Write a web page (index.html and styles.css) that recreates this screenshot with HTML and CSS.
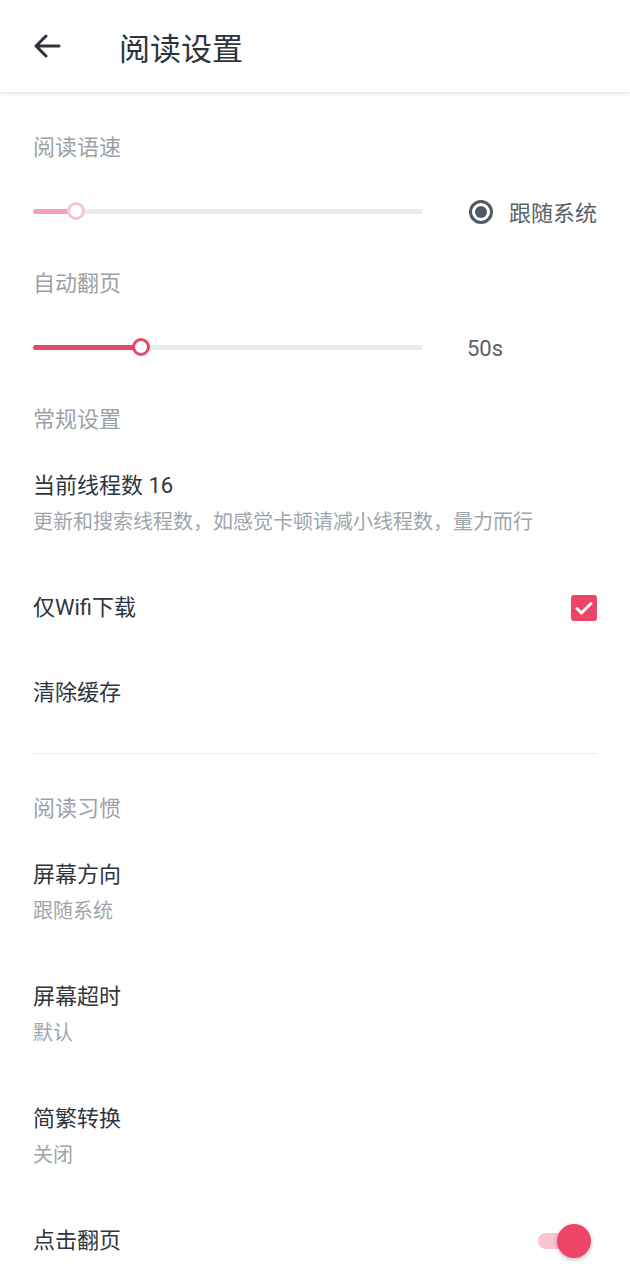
FILE: index.html
```html
<!DOCTYPE html>
<html lang="zh-cn">
  <head>
    <meta charset="utf-8" />
    <meta name="viewport" content="width=device-width, initial-scale=1" />
    <title>阅读设置</title>
    <link rel="stylesheet" href="styles.css">
  </head>
  <body>
    <header class="toolbar">
      <svg class="back" width="28" height="24" viewBox="0 0 28 24">
        <path d="M26 12H3M13 2L3 12l10 10" fill="none" stroke="currentColor" stroke-width="3" stroke-linecap="round" stroke-linejoin="round" />
      </svg>
      <h1 class="toolbar-title">阅读设置</h1>
    </header>

    <main class="content">
      <section class="group">
        <h2 class="group-title">阅读语速</h2>
        <div class="slider-row">
          <div class="slider slider-light">
            <div class="slider-fill" style="width: 11%"></div>
            <div class="slider-thumb" style="left: 11%"></div>
          </div>
          <div class="slider-side">
            <span class="radio"></span>
            <span class="side-text">跟随系统</span>
          </div>
        </div>
        <h2 class="group-title">自动翻页</h2>
        <div class="slider-row">
          <div class="slider">
            <div class="slider-fill" style="width: 27.7%"></div>
            <div class="slider-thumb" style="left: 27.7%"></div>
          </div>
          <div class="slider-side">
            <span class="side-value">50s</span>
          </div>
        </div>
      </section>

      <section class="group group-tight">
        <h2 class="group-title">常规设置</h2>
        <div class="item">
          <div class="item-text">
            <div class="item-title">当前线程数 16</div>
            <div class="item-sub">更新和搜索线程数，如感觉卡顿请减小线程数，量力而行</div>
          </div>
        </div>
        <div class="item">
          <div class="item-text">
            <div class="item-title">仅Wifi下载</div>
          </div>
          <span class="checkbox">
            <svg width="18" height="14" viewBox="0 0 18 14">
              <path d="M2 7.5l4.5 4.5L16 2.5" fill="none" stroke="#fff" stroke-width="3" stroke-linecap="round" stroke-linejoin="round" />
            </svg>
          </span>
        </div>
        <div class="item">
          <div class="item-text">
            <div class="item-title">清除缓存</div>
          </div>
        </div>
      </section>

      <section class="group group-divided">
        <h2 class="group-title">阅读习惯</h2>
        <div class="item">
          <div class="item-text">
            <div class="item-title">屏幕方向</div>
            <div class="item-sub">跟随系统</div>
          </div>
        </div>
        <div class="item">
          <div class="item-text">
            <div class="item-title">屏幕超时</div>
            <div class="item-sub">默认</div>
          </div>
        </div>
        <div class="item">
          <div class="item-text">
            <div class="item-title">简繁转换</div>
            <div class="item-sub">关闭</div>
          </div>
        </div>
        <div class="item">
          <div class="item-text">
            <div class="item-title">点击翻页</div>
          </div>
          <span class="switch"><span class="switch-thumb"></span></span>
        </div>
      </section>
    </main>
  </body>
</html>
```

FILE: styles.css
```css
html,
body {
  margin: 0;
  padding: 0;
  background: #fff;
}
body {
  font-family: Roboto, "Noto Sans CJK SC", sans-serif;
  color: #30363d;
  overflow: hidden;
}

.toolbar {
  height: 92px;
  display: flex;
  align-items: center;
  padding: 0 33px;
  box-sizing: border-box;
  background: #fff;
  box-shadow: 0 1px 4px rgba(0, 0, 0, 0.14);
  position: relative;
  z-index: 1;
}
.back {
  color: #2c333b;
  flex: none;
}
.toolbar-title {
  margin: 0 0 0 58px;
  font-size: 31px;
  font-weight: 400;
  color: #2c333b;
}

.content {
  padding: 0 33px;
}

.group {
  padding-top: 33px;
}
.group-tight {
  padding-top: 0;
}
.group-divided {
  border-top: 1px solid #ececec;
  margin-top: 18px;
  padding-top: 32px;
}

.group-title {
  margin: 0;
  height: 46px;
  line-height: 46px;
  font-size: 22px;
  font-weight: 400;
  color: #9ca1a7;
}

/* sliders */
.slider-row {
  display: flex;
  align-items: center;
  height: 80px;
  margin-bottom: 10px;
  gap: 44px;
}
.slider {
  flex: 1;
  position: relative;
  height: 5px;
  border-radius: 3px;
  background: #ebebeb;
}
.slider-fill {
  height: 100%;
  border-radius: 3px;
  background: #e5486a;
}
.slider-thumb {
  position: absolute;
  top: 50%;
  width: 18px;
  height: 18px;
  margin: -9px 0 0 -9px;
  box-sizing: border-box;
  border: 3px solid #e5486a;
  border-radius: 50%;
  background: #fff;
}
.slider-light .slider-fill {
  background: #f5a2b5;
}
.slider-light .slider-thumb {
  border-color: #f4c6d1;
}
.slider-side {
  width: 130px;
  flex: none;
  display: flex;
  align-items: center;
  white-space: nowrap;
}
.radio {
  flex: none;
  width: 24px;
  height: 24px;
  box-sizing: border-box;
  border: 3px solid #505a64;
  border-radius: 50%;
  display: flex;
  align-items: center;
  justify-content: center;
  margin: 2px 16px 0 2px;
}
.radio::after {
  content: "";
  width: 12px;
  height: 12px;
  border-radius: 50%;
  background: #505a64;
}
.side-text {
  font-size: 22px;
  color: #5b6168;
}
.side-value {
  font-size: 22px;
  color: #5b6168;
  padding-top: 2px;
}

/* list items */
.item {
  display: flex;
  align-items: center;
  padding: 24px 0;
}
.item-text {
  flex: 1;
}
.item-title {
  font-size: 22px;
  line-height: 37px;
  color: #30363d;
}
.item-sub {
  font-size: 20px;
  line-height: 37px;
  color: #a0a5ab;
}

.checkbox {
  width: 26px;
  height: 26px;
  border-radius: 3px;
  background: #ec4567;
  display: flex;
  align-items: center;
  justify-content: center;
}

.switch {
  position: relative;
  width: 48px;
  height: 16px;
  border-radius: 8px;
  background: #f9c5d1;
  margin-right: 11px;
}
.switch-thumb {
  position: absolute;
  right: -5px;
  top: 50%;
  width: 34px;
  height: 34px;
  margin-top: -17px;
  border-radius: 50%;
  background: #ee4567;
  box-shadow: 0 2px 4px rgba(0, 0, 0, 0.25);
}
```
